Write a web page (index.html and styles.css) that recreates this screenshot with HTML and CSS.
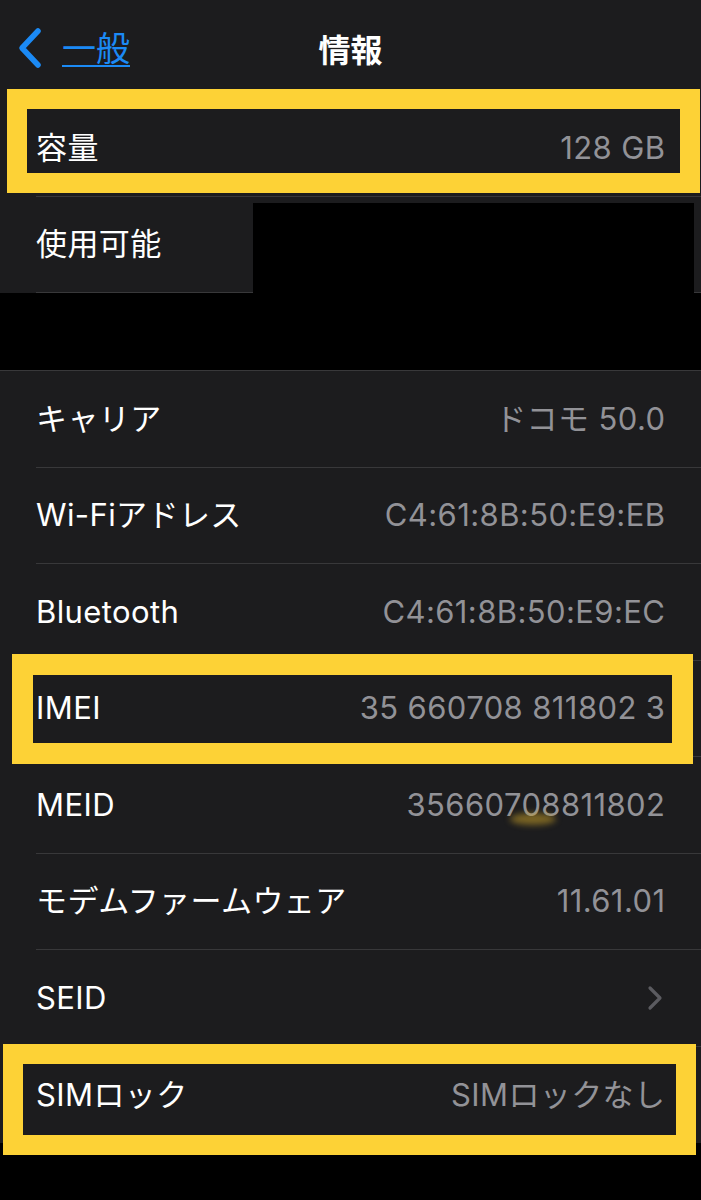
FILE: index.html
```html
<!DOCTYPE html>
<html lang="ja">
<head>
<meta charset="utf-8">
<title>情報</title>
<link rel="stylesheet" href="styles.css">
</head>
<body>
<div class="screen">
  <header class="nav">
    <a class="back" href="#">
      <svg class="chev" width="28" height="42" viewBox="0 0 28 42"><path d="M22 4 L6 21 L22 38" fill="none" stroke="#1b8af5" stroke-width="5.5" stroke-linecap="round" stroke-linejoin="round"/></svg>
      <span class="back-text">一般</span>
    </a>
    <h1 class="title">情報</h1>
  </header>

  <section class="group group-first">
    <div class="row">
      <div class="row-inner"><span class="label">容量</span><span class="value">128 GB</span></div>
      <div class="mark mark-capacity"></div>
    </div>
    <div class="row row-last">
      <div class="row-inner"><span class="label">使用可能</span><span class="value"></span></div>
      <div class="redact"></div>
    </div>
  </section>

  <div class="gap"></div>

  <section class="group group-second">
    <div class="row">
      <div class="row-inner"><span class="label">キャリア</span><span class="value">ドコモ 50.0</span></div>
    </div>
    <div class="row">
      <div class="row-inner"><span class="label">Wi-Fiアドレス</span><span class="value">C4:61:8B:50:E9:EB</span></div>
    </div>
    <div class="row">
      <div class="row-inner"><span class="label">Bluetooth</span><span class="value">C4:61:8B:50:E9:EC</span></div>
    </div>
    <div class="row">
      <div class="row-inner"><span class="label">IMEI</span><span class="value">35 660708 811802 3</span></div>
      <div class="mark mark-imei"></div>
    </div>
    <div class="row">
      <div class="row-inner"><span class="label">MEID</span><span class="value">35660708811802</span></div>
      <div class="smudge"></div>
    </div>
    <div class="row">
      <div class="row-inner"><span class="label">モデムファームウェア</span><span class="value">11.61.01</span></div>
    </div>
    <div class="row">
      <div class="row-inner"><span class="label">SEID</span>
        <svg class="disclosure" width="16" height="26" viewBox="0 0 16 26"><path d="M3 3 L13 13 L3 23" fill="none" stroke="#5b5b60" stroke-width="3.2" stroke-linecap="round" stroke-linejoin="round"/></svg>
      </div>
    </div>
    <div class="row row-last">
      <div class="row-inner"><span class="label">SIMロック</span><span class="value">SIMロックなし</span></div>
      <div class="mark mark-sim"></div>
    </div>
  </section>
</div>
</body>
</html>
```
FILE: styles.css
```css
* { box-sizing: border-box; margin: 0; padding: 0; }
html, body { background: #000; }
body {
  width: 701px;
  height: 1200px;
  overflow: hidden;
  font-family: "Inter", "Noto Sans CJK JP", "Noto Sans", sans-serif;
  color: #fff;
}
.screen { display: flex; flex-direction: column; }

.nav {
  height: 100px;
  background: #1c1c1e;
  display: flex;
  align-items: center;
  justify-content: center;
  position: relative;
}
.back {
  position: absolute;
  left: 16px;
  top: 27px;
  display: flex;
  align-items: center;
  gap: 18px;
  color: #1b8af5;
  text-decoration: none;
}
.back-text {
  font-family: "Noto Sans CJK JP", sans-serif;
  font-size: 34px;
  line-height: 42px;
  text-decoration: underline;
  text-decoration-thickness: 2px;
  text-underline-offset: 4px;
  margin-top: -2px;
}
.title {
  font-family: "Noto Sans CJK JP", sans-serif;
  font-size: 32px;
  font-weight: 700;
  line-height: 42px;
  margin-top: -4px;
}

.group { background: #1c1c1e; display: flex; flex-direction: column; }
.group-first { height: 193px; }
.group-second { border-top: 1px solid #38383a; }
.gap { height: 77px; background: #000; }

.row {
  position: relative;
  padding-left: 36px;
  height: 96.5px;
}
.row-inner {
  height: 100%;
  display: flex;
  align-items: center;
  justify-content: space-between;
  padding-right: 36px;
  border-bottom: 1px solid #38383a;
}
.row-last .row-inner { border-bottom: none; }
.group-first .row-last .row-inner { border-bottom: 1px solid #38383a; }

.label {
  font-size: 31px;
  line-height: 40px;
  color: #fff;
  letter-spacing: 0.4px;
}
.value {
  font-size: 31px;
  line-height: 40px;
  color: #929297;
  letter-spacing: 0.4px;
  margin-right: -0.4px;
}
.disclosure { margin-right: 2px; }

.mark {
  position: absolute;
  border: 20px solid #fdd236;
  pointer-events: none;
}
.mark-capacity { left: 7px; width: 693px; top: -11px; height: 104px; }
.mark-imei { left: 12px; width: 681px; top: -7px; height: 110px; border-width: 21px; }
.mark-sim { left: 3px; width: 693px; top: -3px; height: 111px; }

.redact {
  position: absolute;
  left: 253px;
  width: 441px;
  top: 6px;
  bottom: 0;
  background: #000;
}
.smudge {
  position: absolute;
  left: 510px;
  top: 56px;
  width: 46px;
  height: 12px;
  border-radius: 50%;
  background: rgba(200, 160, 40, 0.55);
  filter: blur(3px);
}
```
